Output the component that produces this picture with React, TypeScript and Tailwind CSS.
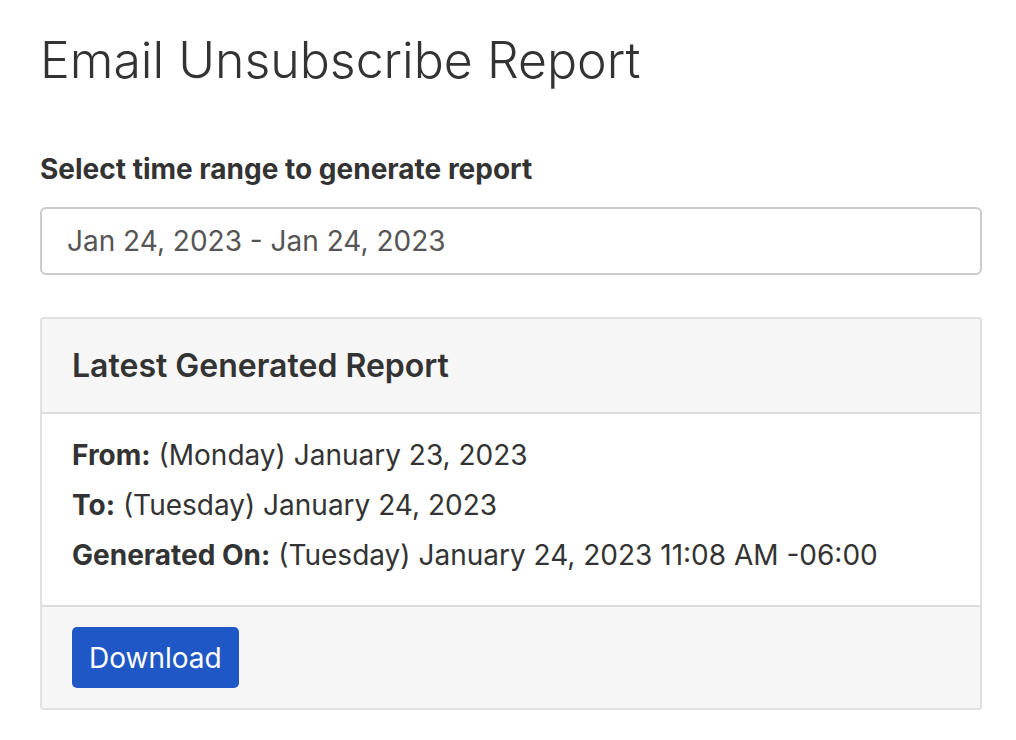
export default function App() {
  return (
    <div className="min-h-screen bg-white pl-[40px] pr-[34px] pt-[24px] text-[#333]" style={{ fontFamily: "Inter, 'Noto Sans', sans-serif" }}>
      <h1 className="text-[50px] font-light leading-[72px] text-[#333]">Email Unsubscribe Report</h1>
      <div className="mt-[56px] text-[28px] font-bold leading-[34px]">Select time range to generate report</div>
      <div className="mt-[21px] flex h-[68px] items-center rounded-[6px] border-2 border-[#cccccc] px-[25px] text-[28px] text-[#555]">
        Jan 24, 2023 - Jan 24, 2023
      </div>
      <div className="mt-[42px] overflow-hidden rounded-[4px] border-2 border-[#e0e0e0]">
        <div className="flex h-[95px] items-center border-b-2 border-[#dddddd] bg-[#f6f6f6] px-[30px] text-[32px] font-semibold">
          Latest Generated Report
        </div>
        <div className="flex flex-col px-[30px] pb-[25px] pt-[16px] text-[28px] leading-[50px]">
          <div><span className="font-bold">From:</span> (Monday) January 23, 2023</div>
          <div><span className="font-bold">To:</span> (Tuesday) January 24, 2023</div>
          <div><span className="font-bold">Generated On:</span> (Tuesday) January 24, 2023 11:08 AM -06:00</div>
        </div>
        <div className="border-t-2 border-[#dddddd] bg-[#f6f6f6] px-[30px] pb-[20px] pt-[20px]">
          <button className="h-[61px] rounded-[5px] bg-[#1f58c6] px-[17px] text-[28px] text-white">Download</button>
        </div>
      </div>
    </div>
  );
}
